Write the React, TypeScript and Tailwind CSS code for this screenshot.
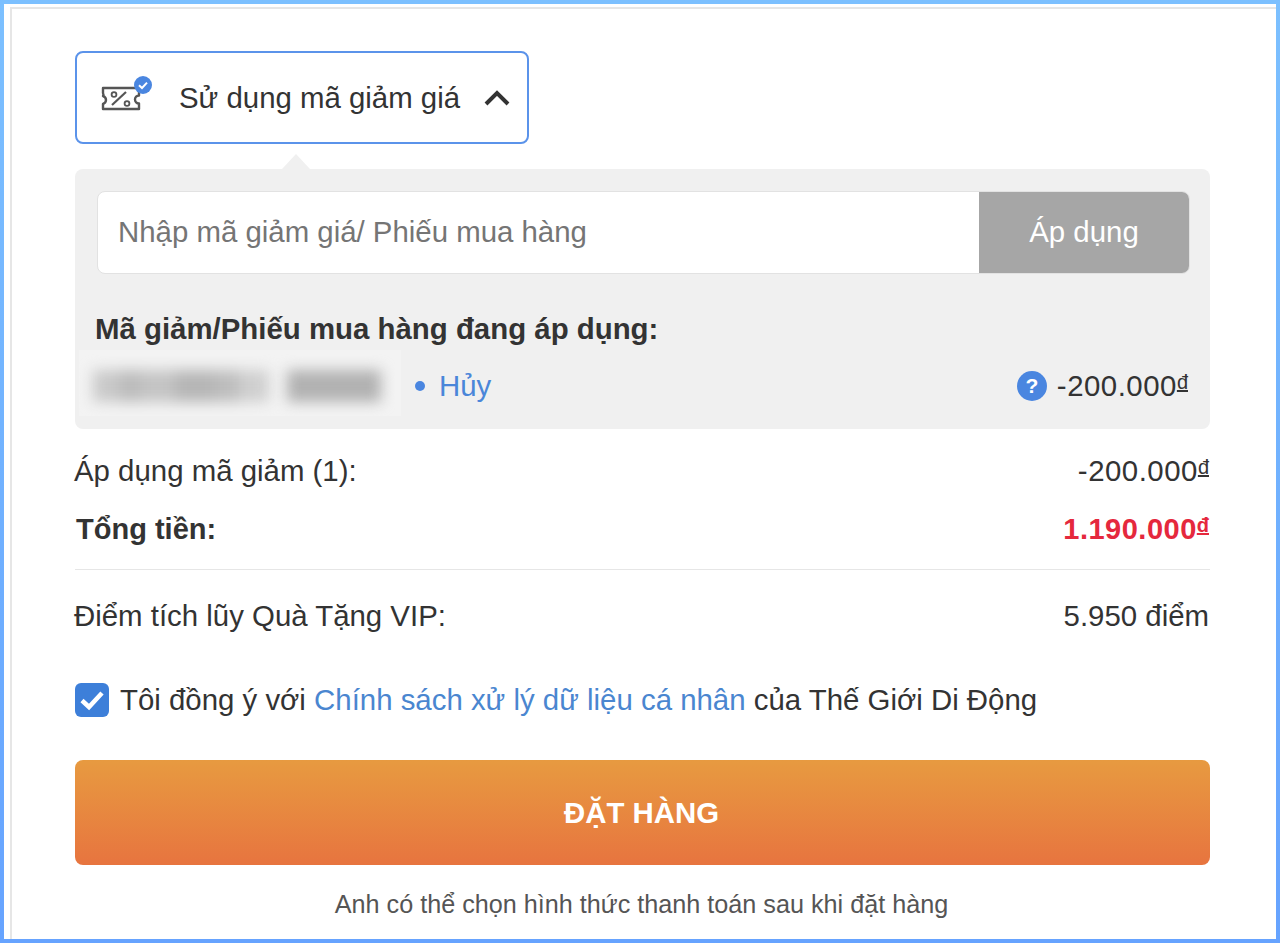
const blurred = [
  { w: "w-[26px]", c: "bg-[#c9c9c9]" },
  { w: "w-[22px]", c: "bg-[#bcbcbc]" },
  { w: "w-[34px]", c: "bg-[#c4c4c4]" },
  { w: "w-[40px]", c: "bg-[#b6b6b6]" },
  { w: "w-[24px]", c: "bg-[#bdbdbd]" },
  { w: "w-[30px]", c: "bg-[#cfcfcf]" },
];

export default function App() {
  return (
    <div className="h-[943px] w-[1280px] overflow-hidden bg-gradient-to-b from-[#7cc0ff] to-[#66a3ff] p-[4px] font-['Liberation_Sans',Arial,sans-serif] text-[#333]">
      <div className="h-full overflow-hidden bg-white pl-[6px] pt-[3px]">
        <div className="h-full border-l-2 border-t-2 border-[#e6e6e6] pl-[63px] pr-[66px] pt-[42px]">
          {/* Coupon toggle */}
          <div className="flex h-[93px] w-[454px] items-center rounded-lg border-2 border-[#5b93ea] pl-[24px]">
            <div className="relative h-[34px] w-[50px]">
              <svg width="44" height="34" viewBox="0 0 44 34" fill="none" className="absolute left-0 top-0">
                <path d="M2 7h36v7.500a4 4 0 0 0 0 8V28H2v-5a4.500 4.500 0 0 0 3-4 4.500 4.500 0 0 0-3-4 3 3 0 0 0 0-3z" stroke="#555" strokeWidth="2.400" strokeLinejoin="round" />
                <path d="M11 24 25 11" stroke="#555" strokeWidth="2.200" />
                <circle cx="13" cy="13.500" r="2.400" stroke="#555" strokeWidth="1.800" />
                <circle cx="26" cy="22.500" r="2.400" stroke="#555" strokeWidth="1.800" />
              </svg>
              <svg width="18" height="18" viewBox="0 0 18 18" className="absolute left-[33px] top-[-5px]">
                <circle cx="9" cy="9" r="9" fill="#4a86e0" />
                <path d="M5 9.200 8 12l5-5.400" stroke="#fff" strokeWidth="2" fill="none" />
              </svg>
            </div>
            <span className="ml-[28px] text-[29.4px] leading-none whitespace-nowrap">Sử dụng mã giảm giá</span>
            <svg width="26" height="18" viewBox="0 0 26 18" className="ml-[24px]" fill="none">
              <path d="M2 15 13 4l11 11" stroke="#333" strokeWidth="4" />
            </svg>
          </div>

          {/* Coupon panel */}
          <div className="relative mt-[25px] h-[260px] rounded-lg bg-[#f0f0f0] pl-[22px] pr-[20px] pt-[22px]">
            <div className="absolute left-[207px] top-[-15px] h-0 w-0 border-x-[14px] border-b-[15px] border-x-transparent border-b-[#f0f0f0]" />
            <div className="flex h-[83px] overflow-hidden rounded-lg border border-[#e2e2e2] bg-white">
              <div className="flex flex-1 items-center pl-[20px] text-[29.4px] text-[#757575]">Nhập mã giảm giá/ Phiếu mua hàng</div>
              <div className="flex w-[210px] items-center justify-center bg-[#a6a6a6] text-[29.4px] text-white">Áp dụng</div>
            </div>
            <div className="ml-[-2px] mt-[40px] text-[29.4px] font-bold leading-none whitespace-nowrap">Mã giảm/Phiếu mua hàng đang áp dụng:</div>
            <div className="mt-[7px] flex h-[66px] items-center">
              <div className="ml-[-18px] flex h-[66px] w-[322px] items-center overflow-hidden bg-[#f3f3f3] pl-[14px] pt-[6px]">
                <div className="flex h-[32px] blur-[7px]">
                  {blurred.map((b, i) => (
                    <div key={i} className={`h-full ${b.w} ${b.c}`} />
                  ))}
                  <div className="h-full w-[18px]" />
                  <div className="h-full w-[94px] bg-[#b2b2b2]" />
                </div>
              </div>
              <span className="ml-[14px] mt-[6px] h-[10px] w-[10px] rounded-full bg-[#4a86e0]" />
              <span className="ml-[14px] mt-[5px] text-[29.4px] text-[#4a86d9]">Hủy</span>
              <div className="ml-auto mt-[5px] flex items-center pr-[2px]">
                <span className="flex h-[30px] w-[30px] items-center justify-center rounded-full bg-[#4a86e0] text-[21px] font-bold text-white">?</span>
                <span className="ml-[10px] text-[29.4px] tracking-[0.5px]">-200.000<sup className="top-[-7px] text-[20px] tracking-normal underline">đ</sup></span>
              </div>
            </div>
          </div>

          {/* Totals */}
          <div className="mt-[22px] flex h-[40px] items-center justify-between text-[29.4px]">
            <span className="ml-[-1px]">Áp dụng mã giảm (1):</span>
            <span className="mr-[1px] tracking-[0.5px]">-200.000<sup className="top-[-7px] text-[20px] tracking-normal underline">đ</sup></span>
          </div>
          <div className="mt-[19px] flex h-[40px] items-center justify-between text-[29px] font-bold">
            <span className="ml-[1px]">Tổng tiền:</span>
            <span className="mr-[1px] tracking-[0.5px] text-[#e5283d]">1.190.000<sup className="top-[-7px] text-[20px] tracking-normal underline">đ</sup></span>
          </div>
          <div className="mt-[19px] border-t border-[#e6e6e6]" />
          <div className="mt-[26px] flex h-[40px] items-center justify-between text-[29.4px]">
            <span className="ml-[-1px]">Điểm tích lũy Quà Tặng VIP:</span>
            <span className="mr-[1px]">5.950 điểm</span>
          </div>

          {/* Policy */}
          <div className="mt-[44px] flex h-[40px] items-center text-[29.4px] whitespace-nowrap">
            <span className="flex h-[34px] w-[34px] items-center justify-center rounded-md bg-[#3d7fd9]">
              <svg width="26" height="22" viewBox="0 0 26 22" fill="none">
                <path d="M3 11.500 10 18 23 4" stroke="#fff" strokeWidth="4.500" />
              </svg>
            </span>
            <span className="ml-[11px]">Tôi đồng ý với <span className="text-[#4a86d0]">Chính sách xử lý dữ liệu cá nhân</span> của Thế Giới Di Động</span>
          </div>

          {/* Order button */}
          <div className="mt-[40px] flex h-[105px] items-center justify-center rounded-lg bg-gradient-to-b from-[#e79a40] to-[#e7743f] pr-[2px] pt-[1px] text-[29.4px] font-bold text-white">ĐẶT HÀNG</div>
          <div className="mt-[27px] pr-[2px] text-center text-[25.2px] leading-none text-[#555]">Anh có thể chọn hình thức thanh toán sau khi đặt hàng</div>
        </div>
      </div>
    </div>
  );
}
